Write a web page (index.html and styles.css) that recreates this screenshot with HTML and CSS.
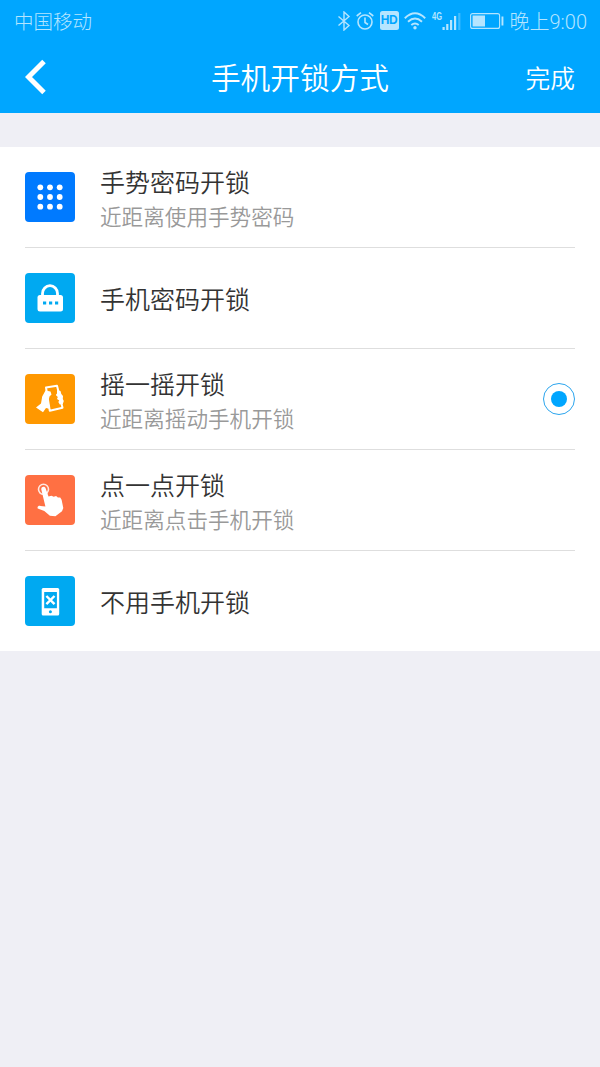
FILE: index.html
```html
<!DOCTYPE html>
<html lang="zh-CN">
<head>
    <meta charset="UTF-8">
    <meta name="viewport" content="width=device-width, initial-scale=1.0">
    <title>手机开锁方式</title>
    <link rel="stylesheet" href="styles.css">
</head>
<body>
    <header class="header">
        <div class="status-bar">
            <span class="carrier">中国移动</span>
            <div class="status-icons">
                <svg class="bluetooth" width="14" height="20" viewBox="0 0 14 20">
                    <path d="M1.5 5.5L12 14.5L7 19V1L12 5.5L1.5 14.5" fill="none" stroke="currentColor" stroke-width="1.4"/>
                </svg>
                <svg class="alarm" width="18" height="20" viewBox="0 0 18 20" fill="none" stroke="currentColor" stroke-width="1.6">
                    <circle cx="9" cy="11" r="7"/>
                    <path d="M9 6.5V11.5L12 13.5M.7 5L5 1.6M17.3 5L13 1.6"/>
                </svg>
                <span class="hd">HD</span>
                <svg class="wifi" width="22" height="18" viewBox="0 0 22 18" fill="none" stroke="currentColor" stroke-width="1.9">
                    <path d="M.8 6.2Q11-3.6 21.2 6.2M4 9.8Q11 3.4 18 9.8M7.3 13Q11 9.8 14.7 13"/>
                    <circle cx="11" cy="15.7" r="1.7" fill="currentColor" stroke="none"/>
                </svg>
                <svg class="signal" width="29" height="20" viewBox="0 0 29 20" fill="currentColor">
                    <text x="0" y="8.5" class="net-text" textLength="10" lengthAdjust="spacingAndGlyphs">4G</text>
                    <path d="M10.5 16h2.2v3h-2.2zM14.2 13h2.2v6h-2.2zM18 9h2.2v10H18zM22 5h2.2v14H22z"/>
                    <path d="M26.2 2h2.2v17h-2.2z" opacity=".35"/>
                </svg>
                <svg class="battery" width="34" height="18" viewBox="0 0 34 18">
                    <rect x=".6" y="1.6" width="29" height="14.8" rx="2" fill="none" stroke="currentColor" stroke-width="1.1"/>
                    <path d="M2.6 3.5H15v11H2.6zM31.5 4.5h1.9v9h-1.9z" fill="currentColor"/>
                </svg>
                <span class="clock">晚上9:00</span>
            </div>
        </div>
        <div class="nav-bar">
            <svg class="back" width="22" height="36" viewBox="0 0 22 36">
                <path d="M19 2.5L3.5 18L19 33.5" fill="none" stroke="#fff" stroke-width="5"/>
            </svg>
            <h1>手机开锁方式</h1>
            <span class="done">完成</span>
        </div>
    </header>

    <ul class="list">
        <li class="item">
            <svg class="icon blue" viewBox="0 0 50 50" fill="#fff">
                <circle cx="15.3" cy="15.3" r="2.9"/><circle cx="25" cy="15.3" r="2.9"/><circle cx="34.7" cy="15.3" r="2.9"/>
                <circle cx="15.3" cy="25" r="2.9"/><circle cx="25" cy="25" r="2.9"/><circle cx="34.7" cy="25" r="2.9"/>
                <circle cx="15.3" cy="34.7" r="2.9"/><circle cx="25" cy="34.7" r="2.9"/><circle cx="34.7" cy="34.7" r="2.9"/>
            </svg>
            <div class="text">
                <p class="name">手势密码开锁</p>
                <p class="desc">近距离使用手势密码</p>
            </div>
        </li>
        <li class="item">
            <svg class="icon sky" viewBox="0 0 50 50">
                <path d="M17.5 23V20.5a7.5 7.8 0 0 1 15 0V23" fill="none" stroke="#fff" stroke-width="2.8"/>
                <rect x="12.5" y="22" width="25.5" height="16.5" rx="2.5" fill="#fff"/>
                <path d="M18 28.5h3.2v3H18zM24 28.5h3.2v3H24zM30 28.5h3.2v3H30z" fill="#00a9f1"/>
            </svg>
            <div class="text">
                <p class="name">手机密码开锁</p>
            </div>
        </li>
        <li class="item">
            <svg class="icon orange" viewBox="0 0 50 50">
                <path d="M21 13.5L32 11.8L37.5 33.8L24.8 36.8Z" fill="none" stroke="#fff" stroke-width="2" stroke-linejoin="round"/>
                <path d="M11 33.5L16 29.5L17.2 22.5L20.5 16.5L25.5 17.5L26.5 20.5L24.5 22.5L23.5 27L25 35L21 34L18 38.2Z" fill="#fff"/>
                <path d="M32 16l3.5 1 .8 3 1.7 2-.2 3 1 2-1 3-3 .5-1.5-2.5 1-1.5-2.3-1.5.8-2-2-2 1.2-1.5z" fill="#fff"/>
            </svg>
            <div class="text">
                <p class="name">摇一摇开锁</p>
                <p class="desc">近距离摇动手机开锁</p>
            </div>
            <span class="radio"></span>
        </li>
        <li class="item">
            <svg class="icon coral" viewBox="0 0 50 50">
                <circle cx="18.5" cy="14.3" r="5" fill="none" stroke="#ffe7df" stroke-width="1.6"/>
                <path d="M16.3 14.5c-.4-3.2 3.9-3.7 4.5-.7L23.5 21.5l3-.8 2.2 1 2.4-.6 1.8 1.3 2.3.1 1.4 2.2L38.3 33l-1.3 3.2-6.6 5-5.5-.4-5.6-4.9-6.6-2.5c-.7-2.1 1.2-2.8 2.7-2.5l5 .6z" fill="#fff"/>
            </svg>
            <div class="text">
                <p class="name">点一点开锁</p>
                <p class="desc">近距离点击手机开锁</p>
            </div>
        </li>
        <li class="item">
            <svg class="icon sky" viewBox="0 0 50 50">
                <rect x="16.7" y="12" width="17.5" height="27.5" rx="1.5" fill="#fff"/>
                <path d="M19.2 16h12.7v16.2H19.2z" fill="#00a9f1"/>
                <path d="M21.4 20L29.5 28.2M29.5 20L21.4 28.2" stroke="#fff" stroke-width="2.4"/>
                <circle cx="25.4" cy="35.8" r="1.5" fill="#00a9f1"/>
            </svg>
            <div class="text">
                <p class="name">不用手机开锁</p>
            </div>
        </li>
    </ul>
</body>
</html>
```
FILE: styles.css
```css
* {
    margin: 0;
    padding: 0;
    box-sizing: border-box;
}

body {
    font-family: "Noto Sans CJK SC", sans-serif;
    font-weight: 350;
    background-color: #efeff5;
    color: #333;
    min-height: 100vh;
}

.header {
    height: 113px;
    background-color: #00a6ff;
    color: #fff;
}

.status-bar {
    display: flex;
    justify-content: space-between;
    align-items: center;
    height: 41px;
    padding: 0 13px 0 14px;
    font-size: 19.5px;
    font-weight: 300;
    color: #b5e5ff;
}

.status-icons {
    display: flex;
    align-items: center;
}

.bluetooth {
    margin-right: 5px;
}

.alarm {
    margin-right: 6px;
}

.hd {
    width: 19px;
    height: 19px;
    margin-right: 5px;
    border-radius: 2.5px;
    background-color: #b5e5ff;
    color: #00a6ff;
    font: bold 12px/19px "Liberation Sans", sans-serif;
    letter-spacing: -0.3px;
    text-align: center;
}

.wifi {
    margin-right: 6px;
}

.net-text {
    font: bold 10px "Liberation Sans", sans-serif;
}

.signal {
    margin-right: 9px;
}

.battery {
    margin-right: 6px;
}

.clock {
    font-family: Roboto, "Noto Sans CJK SC", sans-serif;
    font-size: 20px;
}

.nav-bar {
    display: grid;
    grid-template-columns: 1fr auto 1fr;
    align-items: center;
    height: 72px;
    padding: 0 25px;
}

h1 {
    padding-bottom: 1px;
    font-size: 29.7px;
    font-weight: 350;
}

.done {
    justify-self: end;
    font-size: 24.7px;
}

.list {
    margin-top: 34px;
    padding: 0 25px;
    background-color: #fff;
    list-style: none;
}

.item {
    display: flex;
    align-items: center;
    height: 101px;
    border-bottom: 1px solid #dedede;
}

.item:last-child {
    height: 100px;
    border-bottom: none;
}

.icon {
    width: 50px;
    height: 50px;
    margin-right: 25px;
    border-radius: 4px;
}

.blue {
    background-color: #007aff;
}

.sky {
    background-color: #00a9f1;
}

.orange {
    background-color: #ff9800;
}

.coral {
    background-color: #ff7043;
}

.text {
    flex: 1;
}

.name {
    font-size: 25px;
    line-height: 36px;
}

.desc {
    padding-top: 1px;
    font-size: 21.6px;
    line-height: 32px;
    color: #999;
}

.radio {
    display: flex;
    justify-content: center;
    align-items: center;
    width: 32px;
    height: 32px;
    border: 1px solid #2ba5ee;
    border-radius: 50%;
}

.radio::after {
    content: "";
    width: 16px;
    height: 16px;
    border-radius: 50%;
    background-color: #00a6ff;
}
```
